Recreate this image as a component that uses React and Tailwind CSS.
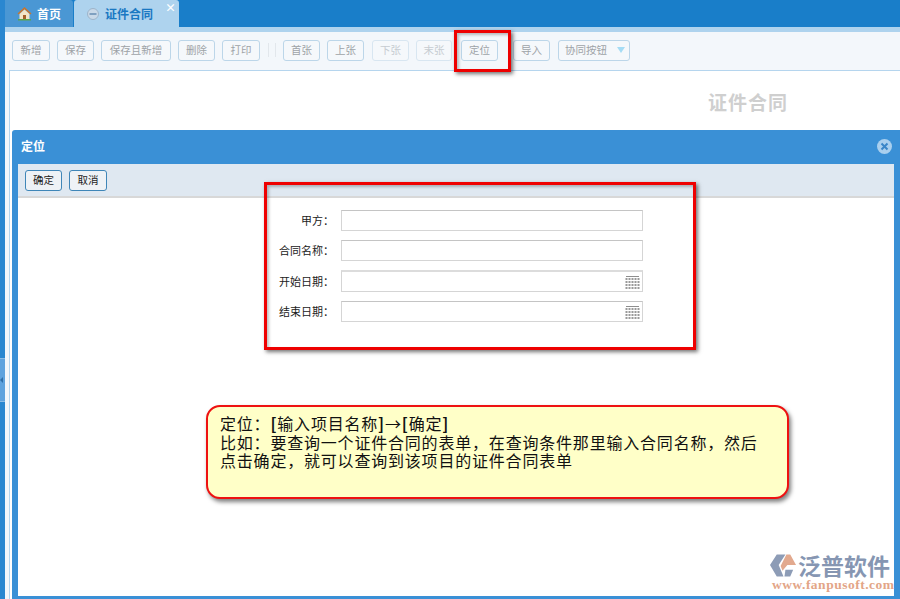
import React from "react";

const F = '"Noto Sans CJK SC", "Liberation Sans", sans-serif';
const C = "\uFF1A";
const D = "\uFF0C";

function Btn({ w, children, dim, mr = "mr-[7px]" }) {
  return (
    <div
      style={{ width: w }}
      className={`h-[21px] shrink-0 ${mr} flex items-center justify-center rounded-[3px] border bg-[#f5f8fb] text-[10.5px] ${
        dim ? "border-[#d8e6f1] text-[#c6ccd1]" : "border-[#bcd6e9] text-[#9ea3a7]"
      }`}
    >
      {children}
    </div>
  );
}

function Cal() {
  return (
    <svg width="15" height="15" viewBox="0 0 15 15" className="absolute right-[2px] top-[3px]">
      <rect x="1" y="1" width="13" height="1" fill="#8e8e8e" />
      {[4, 7, 10, 13].map((y) =>
        [1, 4, 7, 10, 13].map((x) => <rect key={`${x}-${y}`} x={x - 0.5} y={y - 1} width="2" height="2" fill="#9a9a9a" />)
      )}
    </svg>
  );
}

function Row({ label, cal, h = "h-[21px]", top = "border-t-[#c4c4c4]" }) {
  return (
    <div className="flex items-center">
      <div className="w-[334px] text-right text-[11px] text-[#222]">{label}{C}</div>
      <div className={`relative ml-[7px] w-[302px] ${h} border border-[#d5d5d5] ${top} bg-white`}>
        {cal && <Cal />}
      </div>
    </div>
  );
}

export default function App() {
  return (
    <div style={{ fontFamily: F }} className="relative flex h-[599px] w-[900px] overflow-hidden bg-[#1a7fca]">
      {/* left rail */}
      <div className="relative w-[5px] shrink-0 bg-[#2a87d0]">
        <div className="absolute left-0 top-[358px] flex h-[44px] w-[5px] items-center border-y border-[#8cbde6] bg-[#5fa3de]">
          <svg width="3" height="6" viewBox="0 0 3 6">
            <path d="M3 0v6L0 3z" fill="#2f6fa8" />
          </svg>
        </div>
      </div>

      <div className="flex min-w-0 flex-1 flex-col">
        {/* tabs */}
        <div className="flex h-[27px] shrink-0 items-end bg-[#197ec9]">
          <div className="flex h-[27px] w-[68px] items-center rounded-tr-[3px] bg-[#4a97d4] pl-[12px] text-[12px] font-bold text-white">
            <svg width="15" height="15" viewBox="0 0 15 15">
              <path d="M0.5 7.5 7.5 1l7 6.5-1.2 1L7.5 3.2 1.7 8.500z" fill="#c8752e" />
              <path d="M2.500 8 7.500 3.600 12.500 8v5h-10z" fill="#f3e6c8" />
              <rect x="6" y="9" width="3" height="4" fill="#a5612a" />
              <rect x="1" y="13" width="13" height="1.500" fill="#5da64a" />
            </svg>
            <span className="ml-[5px]">首页</span>
          </div>
          <div className="relative ml-[1px] flex h-[27px] w-[105px] items-center rounded-t-[3px] bg-[#aed3ee] pl-[13px] text-[12px] font-bold text-[#1a78c2]">
            <svg width="12" height="12" viewBox="0 0 12 12">
              <circle cx="6" cy="6" r="5.500" fill="#c9d9e8" stroke="#9db4c9" />
              <rect x="2.500" y="5" width="7" height="2" fill="#7fa0c0" />
            </svg>
            <span className="ml-[6px]">证件合同</span>
            <span className="absolute right-[3px] top-[0px] text-[11px] leading-[14px] font-bold text-white">×</span>
          </div>
        </div>
        <div className="h-[5px] shrink-0 bg-[#aed3ee]" />

        {/* toolbar */}
        <div className="flex h-[36px] shrink-0 items-center bg-[#f3f7fb] pl-[7px]">
          <Btn w={38}>新增</Btn>
          <Btn w={37}>保存</Btn>
          <Btn w={70}>保存且新增</Btn>
          <Btn w={37}>删除</Btn>
          <Btn w={38} mr="mr-[8px]">打印</Btn>
          <div className="mr-[7px] flex h-[14px] w-[8px] justify-between">
            <span className="w-px bg-[#e2e7ec]" />
            <span className="w-px bg-[#e2e7ec]" />
          </div>
          <Btn w={37}>首张</Btn>
          <Btn w={37} mr="mr-[8px]">上张</Btn>
          <Btn w={37} dim>下张</Btn>
          <Btn w={36} dim mr="mr-[9px]">末张</Btn>
          <Btn w={37} mr="mr-[15px]">定位</Btn>
          <Btn w={37} mr="mr-[8px]">导入</Btn>
          <div className="flex h-[21px] w-[72px] items-center rounded-[3px] border border-[#bcd6e9] bg-[#f5f8fb] pl-[6px] text-[10.5px] text-[#9ea3a7]">
            协同按钮
            <svg width="8" height="6" viewBox="0 0 8 6" className="ml-[10px]">
              <path d="M0 0h8L4 6z" fill="#a5dcf5" />
            </svg>
          </div>
        </div>

        {/* content */}
        <div className="flex flex-1 bg-[#f3f7fb] pl-[4px] pt-[2px]">
          <div className="flex-1 border-l border-t border-[#b5d5ee] bg-white pt-[19px] pl-[698px]">
            <div className="text-[19px] leading-[24px] font-bold tracking-[1px] text-[#cfcfcf]">证件合同</div>
          </div>
        </div>
      </div>

      {/* dialog window */}
      <div className="absolute left-[12px] top-[130px] flex h-[469px] w-[888px] flex-col rounded-tl-[3px] bg-[#3a90d6] px-[6px] pb-[3px]">
        <div className="flex h-[32px] shrink-0 items-center justify-between">
          <span className="pl-[3px] text-[12px] font-bold text-white">定位</span>
          <svg width="15" height="15" viewBox="0 0 15 15" className="mr-[2px]">
            <circle cx="7.500" cy="7.500" r="7.500" fill="#a9cfee" />
            <path d="M4.500 4.500 10.500 10.500M10.500 4.500 4.500 10.500" stroke="#3a86c8" strokeWidth="2" />
          </svg>
        </div>
        <div className="mt-[2px] flex h-[34px] shrink-0 items-center border-b-2 border-[#d8d8d8] bg-[#dfe8f1] pl-[7px]">
          <div className="flex h-[21px] w-[37px] items-center justify-center rounded-[3px] border border-[#3f86b8] bg-[#eef2f6] text-[10.5px] text-[#222]">确定</div>
          <div className="ml-[7px] flex h-[21px] w-[38px] items-center justify-center rounded-[3px] border border-[#3f86b8] bg-[#eef2f6] text-[10.5px] text-[#222]">取消</div>
        </div>
        <div className="flex-1 bg-white pt-[12px]">
          <div className="ml-[-18px] flex flex-col gap-[9px]">
            <Row label="甲方" />
            <Row label="合同名称" />
            <Row label="开始日期" cal h="h-[22px]" top="border-t-[2px] border-t-[#dcdcdc]" />
            <Row label="结束日期" cal />
          </div>
        </div>
      </div>

      {/* annotations */}
      <div className="absolute left-[454px] top-[30px] h-[42px] w-[57px] border-[3px] border-[#ee0000] shadow-[2px_2px_4px_rgba(0,0,0,0.55),inset_2px_2px_3px_rgba(0,0,0,0.25)]" />
      <div className="absolute left-[264px] top-[182px] h-[168px] w-[432px] border-[3px] border-[#ee0000] shadow-[2px_2px_4px_rgba(0,0,0,0.55),inset_2px_2px_3px_rgba(0,0,0,0.25)]" />

      <div className="absolute left-[206px] top-[405px] h-[94px] w-[583px] rounded-[14px] border-2 border-[#ee1111] bg-[#ffffc8] pl-[12px] pt-[7px] text-[16px] leading-[18.500px] tracking-[0.8px] text-[#111] shadow-[2px_3px_4px_rgba(0,0,0,0.5)]">
        <div>定位{C}<b>[</b>输入项目名称<b>]</b>→<b>[</b>确定<b>]</b></div>
        <div>比如{C}要查询一个证件合同的表单{D}在查询条件那里输入合同名称{D}然后</div>
        <div>点击确定{D}就可以查询到该项目的证件合同表单</div>
      </div>

      {/* logo */}
      <div className="absolute left-[770px] top-[553px] flex h-[44px] w-[124px] flex-col">
        <div className="flex items-center">
          <svg width="27" height="25" viewBox="0 0 28 25" className="shrink-0">
            <path d="M7 1h9L9 12l5 12H7L0 12z" fill="#8d9cb6" />
            <path d="M17 1h4l6 11-9 0-5 6-2-5z" fill="#e2a98e" />
            <path d="M16 17h8l-3 7h-6z" fill="#8d9cb6" />
          </svg>
          <span className="ml-[1px] text-[23px] leading-[25px] font-bold whitespace-nowrap text-[#8696b2]">泛普软件</span>
        </div>
        <div style={{ fontFamily: '"Liberation Serif", serif' }} className="ml-[2px] text-[13.500px] leading-[14px] font-bold tracking-[0.5px] whitespace-nowrap text-[#e3a587]">
          www.fanpusoft.com
        </div>
      </div>
    </div>
  );
}
